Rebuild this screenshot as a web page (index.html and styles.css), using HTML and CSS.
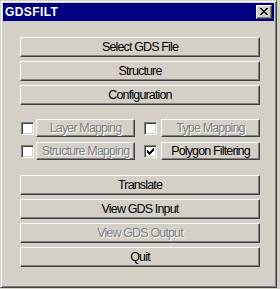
FILE: index.html
```html
<!DOCTYPE html>
<html>
<head>
<meta charset="utf-8">
<link rel="stylesheet" href="styles.css">
</head>
<body>
<div class="window">
  <div class="titlebar">
    <span class="title">GDSFILT</span>
    <div class="close">
      <svg width="8" height="7" viewBox="0 0 8 7" shape-rendering="crispEdges">
        <path d="M0 0h2v1h-2zM6 0h2v1h-2zM1 1h2v1h-2zM5 1h2v1h-2zM2 2h4v1h-4zM3 3h2v1h-2zM2 4h4v1h-4zM1 5h2v1h-2zM5 5h2v1h-2zM0 6h2v1h-2zM6 6h2v1h-2z" fill="#000"/>
      </svg>
    </div>
  </div>
  <div class="content">
    <div class="group">
      <div class="btn">Select GDS File</div>
      <div class="btn">Structure</div>
      <div class="btn">Configuration</div>
    </div>
    <div class="checks">
      <div class="checkrow">
        <div class="item first"><span class="cb"></span><div class="btn small disabled">Layer Mapping</div></div>
        <div class="item second"><span class="cb"></span><div class="btn small disabled">Type Mapping</div></div>
      </div>
      <div class="checkrow">
        <div class="item first"><span class="cb"></span><div class="btn small disabled">Structure Mapping</div></div>
        <div class="item second"><span class="cb">
          <svg width="7" height="7" viewBox="0 0 7 7" shape-rendering="crispEdges"><path d="M6 0h1v3h-1zM5 1h1v3h-1zM4 2h1v3h-1zM3 3h1v3h-1zM2 4h1v3h-1zM1 3h1v3h-1zM0 2h1v3h-1z" fill="#000"/></svg>
        </span><div class="btn small">Polygon Filtering</div></div>
      </div>
    </div>
    <div class="group">
      <div class="btn">Translate</div>
      <div class="btn">View GDS Input</div>
      <div class="btn disabled">View GDS Output</div>
      <div class="btn">Quit</div>
    </div>
  </div>
</div>
</body>
</html>
```
FILE: styles.css
```css
html, body {
  margin: 0;
  padding: 0;
  background: #d4d0c8;
}
.window {
  width: 277px;
  height: 288px;
  box-sizing: border-box;
  border: 1px solid;
  border-color: #d4d0c8 #404040 #404040 #d4d0c8;
  box-shadow: inset 1px 1px #ffffff, inset -1px -1px #808080;
  padding: 2px;
  background: #d4d0c8;
  display: flex;
  flex-direction: column;
}
.titlebar {
  height: 18px;
  background: #000080;
  display: flex;
  align-items: center;
  padding-left: 2px;
}
.title {
  color: #fff;
  font-family: "Liberation Sans", Arial, sans-serif;
  font-weight: bold;
  font-size: 12px;
  letter-spacing: 0.4px;
}
.close {
  margin-left: auto;
  margin-right: 2px;
  width: 16px;
  height: 14px;
  box-sizing: border-box;
  background: #d4d0c8;
  border: 1px solid;
  border-color: #fff #404040 #404040 #fff;
  box-shadow: inset -1px -1px #808080;
  display: flex;
  align-items: center;
  justify-content: center;
  padding: 0 1px 1px 0;
}
.content {
  padding: 16px 0 0 17px;
  display: flex;
  flex-direction: column;
}
.group {
  display: flex;
  flex-direction: column;
  gap: 4px;
}
.btn {
  width: 240px;
  height: 20px;
  box-sizing: border-box;
  border: 1px solid;
  border-color: #fff #404040 #404040 #fff;
  box-shadow: inset -1px -1px #808080;
  background: #d4d0c8;
  display: flex;
  align-items: center;
  justify-content: center;
  font-family: "Liberation Sans", Arial, sans-serif;
  font-size: 12.5px;
  letter-spacing: -0.85px;
  color: #000;
  padding-bottom: 1px;
}
.btn.disabled {
  color: #808080;
  text-shadow: 1px 1px 0 #fff;
}
.checks {
  margin-top: 14px;
  margin-bottom: 15px;
  display: flex;
  flex-direction: column;
  gap: 5px;
}
.checkrow {
  display: flex;
  height: 18px;
}
.item {
  display: flex;
  align-items: center;
}
.item.first {
  margin-left: 1px;
  gap: 2px;
}
.item.second {
  margin-left: 9px;
  gap: 4px;
}
.btn.small {
  width: 99px;
  height: 18px;
}
.cb {
  width: 13px;
  height: 13px;
  box-sizing: border-box;
  border: 1px solid;
  border-color: #808080 #fff #fff #808080;
  box-shadow: inset 1px 1px #404040, inset -1px -1px #d4d0c8;
  background: #fff;
  display: flex;
  align-items: center;
  justify-content: center;
}
```
